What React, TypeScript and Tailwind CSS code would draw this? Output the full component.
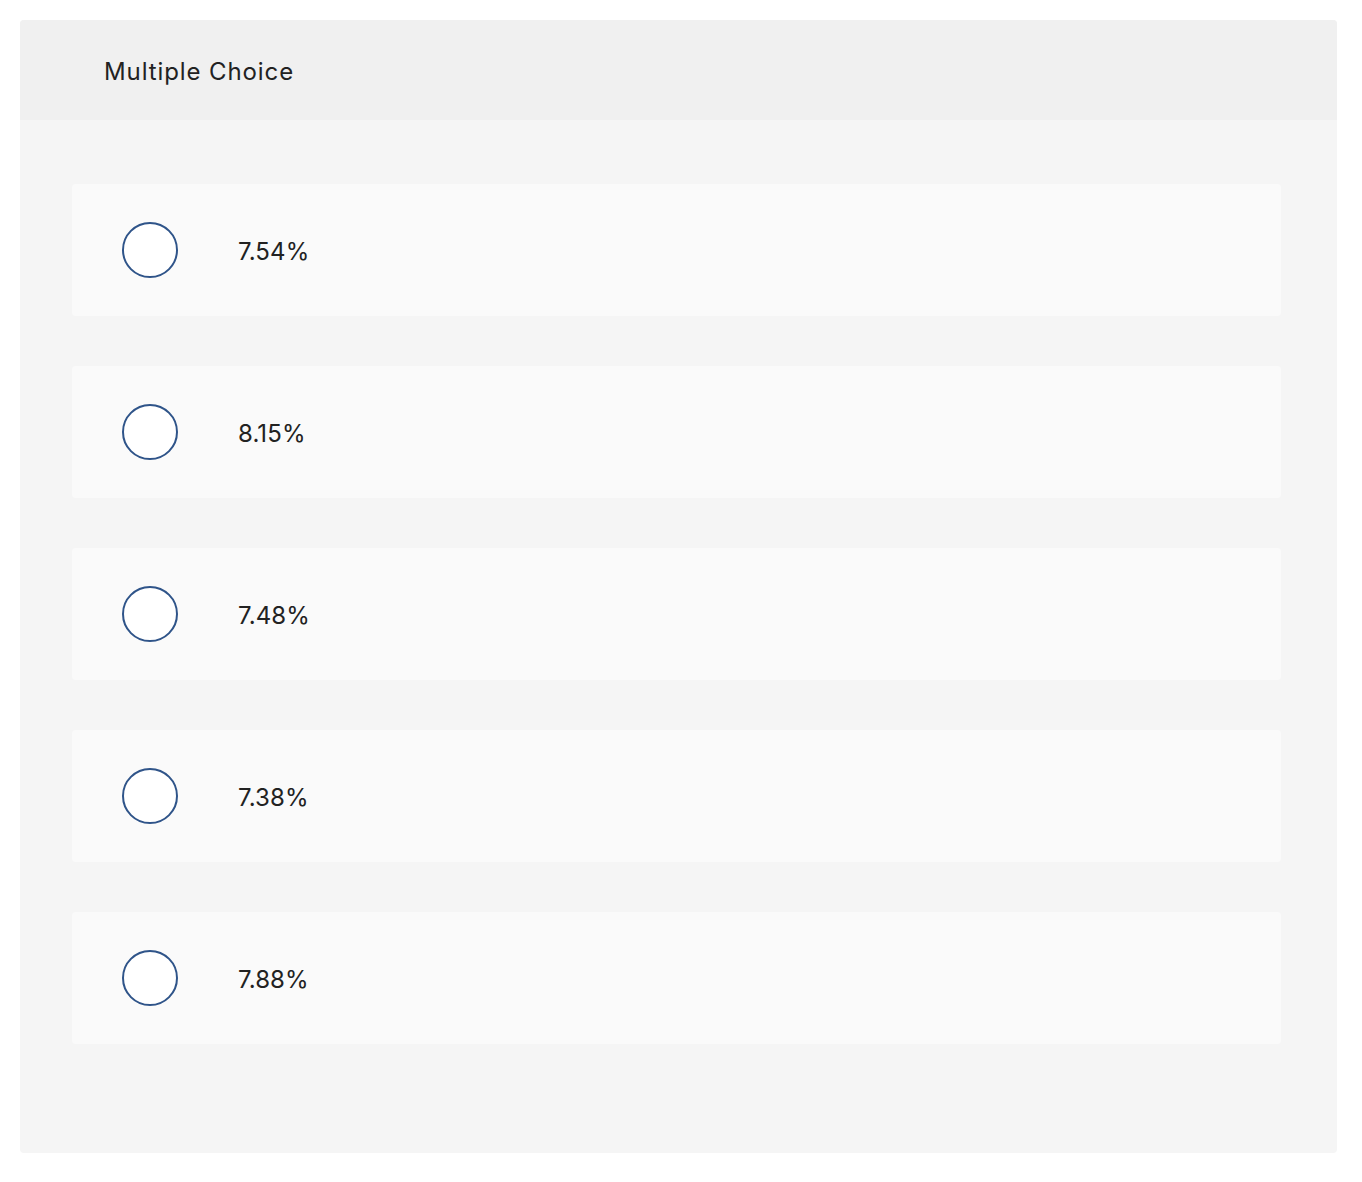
const options = ['7.54%', '8.15%', '7.48%', '7.38%', '7.88%'];

export default function App() {
  return (
    <div className="min-h-screen bg-white py-5 pl-5 pr-[25px]" style={{ fontFamily: 'Inter, "Open Sans", sans-serif' }}>
      <div className="overflow-hidden rounded bg-[#f5f5f5] pb-[109px]">
        <div className="flex h-[100px] items-center bg-[#f0f0f0] pl-[84px] pt-[3px] text-[24px] tracking-[0.9px] text-[#222]">
          Multiple Choice
        </div>
        <div className="flex flex-col gap-[50px] pl-[52px] pr-[56px] pt-[64px]">
          {options.map((opt) => (
            <div key={opt} className="flex h-[132px] items-center rounded bg-[#fafafa] pl-[50px]">
              <span className="h-[56px] w-[56px] shrink-0 rounded-full border-2 border-[#2f5489] bg-white" />
              <span className="ml-[60px] pt-[3px] text-[24px] tracking-[0.1px] text-[#222]">{opt}</span>
            </div>
          ))}
        </div>
      </div>
    </div>
  );
}
